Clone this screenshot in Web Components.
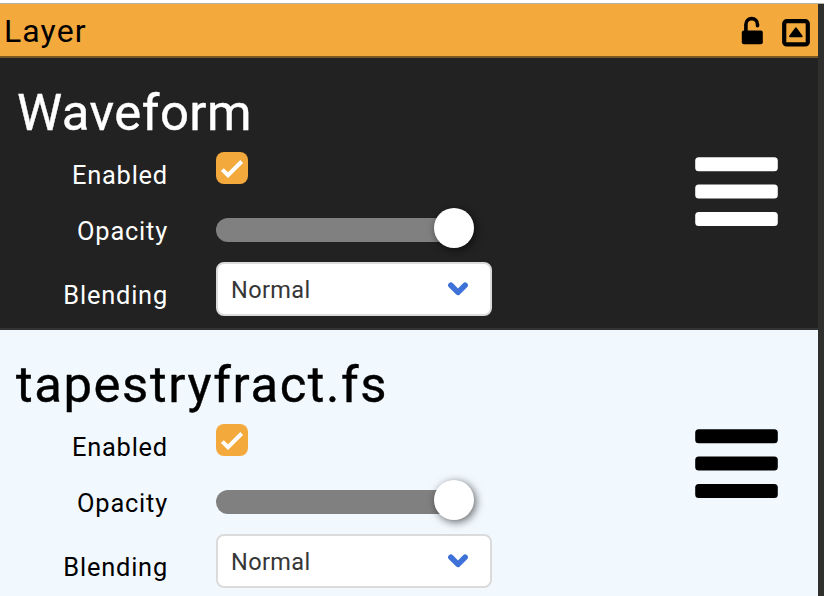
<!DOCTYPE html>
<html lang="en">
<head>
<meta charset="utf-8">
<title>Layer</title>
<style>
html,body{margin:0;height:100%;overflow:hidden}
body{font-family:Roboto,"Open Sans",sans-serif;background:#2f2f2d}
</style>
</head>
<body>
<layer-panel>
  <panel-header>Layer</panel-header>
  <layer-card style="--bg:#222;--fg:#fff;--edge:#333;--ts:.5px;--tx:17px">
    <span slot="title">Waveform</span>
  </layer-card>
  <layer-card style="--bg:#f1f8fe;--fg:#000;--edge:#333;--ts:1.6px;--tx:16px">
    <span slot="title">tapestryfract.fs</span>
  </layer-card>
</layer-panel>
<script>
const define = (name, html) => customElements.define(name, class extends HTMLElement {
  constructor() {
    super();
    this.attachShadow({mode: 'open'}).innerHTML = html;
  }
});

define('layer-panel', `<style>
:host{display:flex;flex-direction:column;box-sizing:border-box;width:818px;height:596px}
.top{flex:none;width:100vw;height:3px;background:#fff;border-bottom:1px solid #b5b2ac}
</style><div class="top"></div><slot></slot>`);

define('panel-header', `<style>
:host{display:flex;flex:none;align-items:center;box-sizing:border-box;height:54px;background:#f4a93c;border-bottom:2px solid #7a5722;color:#000}
.t{flex:1;font-size:32px;line-height:48px;letter-spacing:1.1px;padding:2px 0 0 4px}
svg{display:block;flex:none}
.lock{margin:1px 18px 0 0}
.up{margin:5px 8px 0 0}
</style><span class="t"><slot></slot></span>
<svg class="lock" width="23" height="30" viewBox="0 0 23 30"><path d="M4.9 16V8.4a5.8 5.8 0 0 1 11.6 0v1.4" fill="none" stroke="#000" stroke-width="3.6" stroke-linecap="round"/><rect x=".8" y="14.5" width="21" height="13.8" rx="2"/></svg>
<svg class="up" width="28" height="28" viewBox="0 0 28 28"><rect x="2.2" y="2.2" width="23.6" height="23.2" rx="2.5" fill="none" stroke="#000" stroke-width="4.2"/><path d="M13.9 9.2L19.8 17.3H8Z" stroke="#000" stroke-width="1.8" stroke-linejoin="round"/></svg>`);

define('check-box', `<style>
:host{display:block;width:32px;height:32px;border-radius:8px;background:#f4a93c}
svg{display:block}
</style><svg width="32" height="32" viewBox="0 0 32 32"><path d="M6.3 17.6L12 23.2L25.7 9.5" fill="none" stroke="#fff" stroke-width="4"/></svg>`);

define('opacity-slider', `<style>
:host{display:flex;align-items:center;justify-content:flex-end;width:258px;height:40px}
.track{flex:1;height:24px;margin:4px -20px 0 0;border-radius:12px;background:#808080}
.thumb{width:40px;height:40px;border-radius:50%;background:#fff;box-shadow:2px 2px 8px rgba(0,0,0,.6);position:relative}
</style><div class="track"></div><div class="thumb"></div>`);

define('select-box', `<style>
:host{display:flex;align-items:center;justify-content:space-between;box-sizing:border-box;width:276px;height:54px;border:2px solid #dbdbdb;border-radius:8px;background:#fff;color:#363636;padding:0 22px 0 13px;font-size:23.5px;letter-spacing:.4px}
.v{padding-top:2px}
svg{display:block}
</style><span class="v"><slot></slot></span><svg width="20" height="14" viewBox="0 0 20 14"><path d="M2.9 3.2L10 10.4L17.1 3.2" fill="none" stroke="#3e72d8" stroke-width="5.6" stroke-linecap="round" stroke-linejoin="round"/></svg>`);

define('drag-handle', `<style>
:host{display:block;width:83px;height:70px}
svg{display:block;fill:currentColor}
</style><svg width="83" height="70" viewBox="0 0 83 70"><rect x=".2" y=".3" width="82.6" height="14" rx="3.5"/><rect x=".2" y="27.6" width="82.6" height="14" rx="3.5"/><rect x=".2" y="55" width="82.6" height="14" rx="3.5"/></svg>`);

define('layer-card', `<style>
:host{display:grid;flex:none;box-sizing:border-box;height:272px;grid-template-columns:1fr 123px;grid-template-rows:270px;background:var(--bg);color:var(--fg);border-bottom:2px solid var(--edge)}
.title{font-size:50.8px;line-height:60px;height:69px;padding:25px 0 0 var(--tx);letter-spacing:var(--ts);white-space:nowrap;-webkit-text-stroke:.4px currentColor}
.row{display:grid;grid-template-columns:168px auto;column-gap:48px;align-items:start;justify-content:start}
.r1{height:56px}.r2{height:54px}
label{font-size:25.4px;line-height:30px;padding-top:8px;text-align:right;letter-spacing:.8px}
.r3 label{padding-top:18px}
drag-handle{margin-top:99px}
</style>
<div>
<div class="title"><slot name="title"></slot></div>
<div class="row r1"><label>Enabled</label><check-box></check-box></div>
<div class="row r2"><label>Opacity</label><opacity-slider></opacity-slider></div>
<div class="row r3"><label>Blending</label><select-box>Normal</select-box></div>
</div>
<drag-handle></drag-handle>`);
</script>
</body>
</html>
